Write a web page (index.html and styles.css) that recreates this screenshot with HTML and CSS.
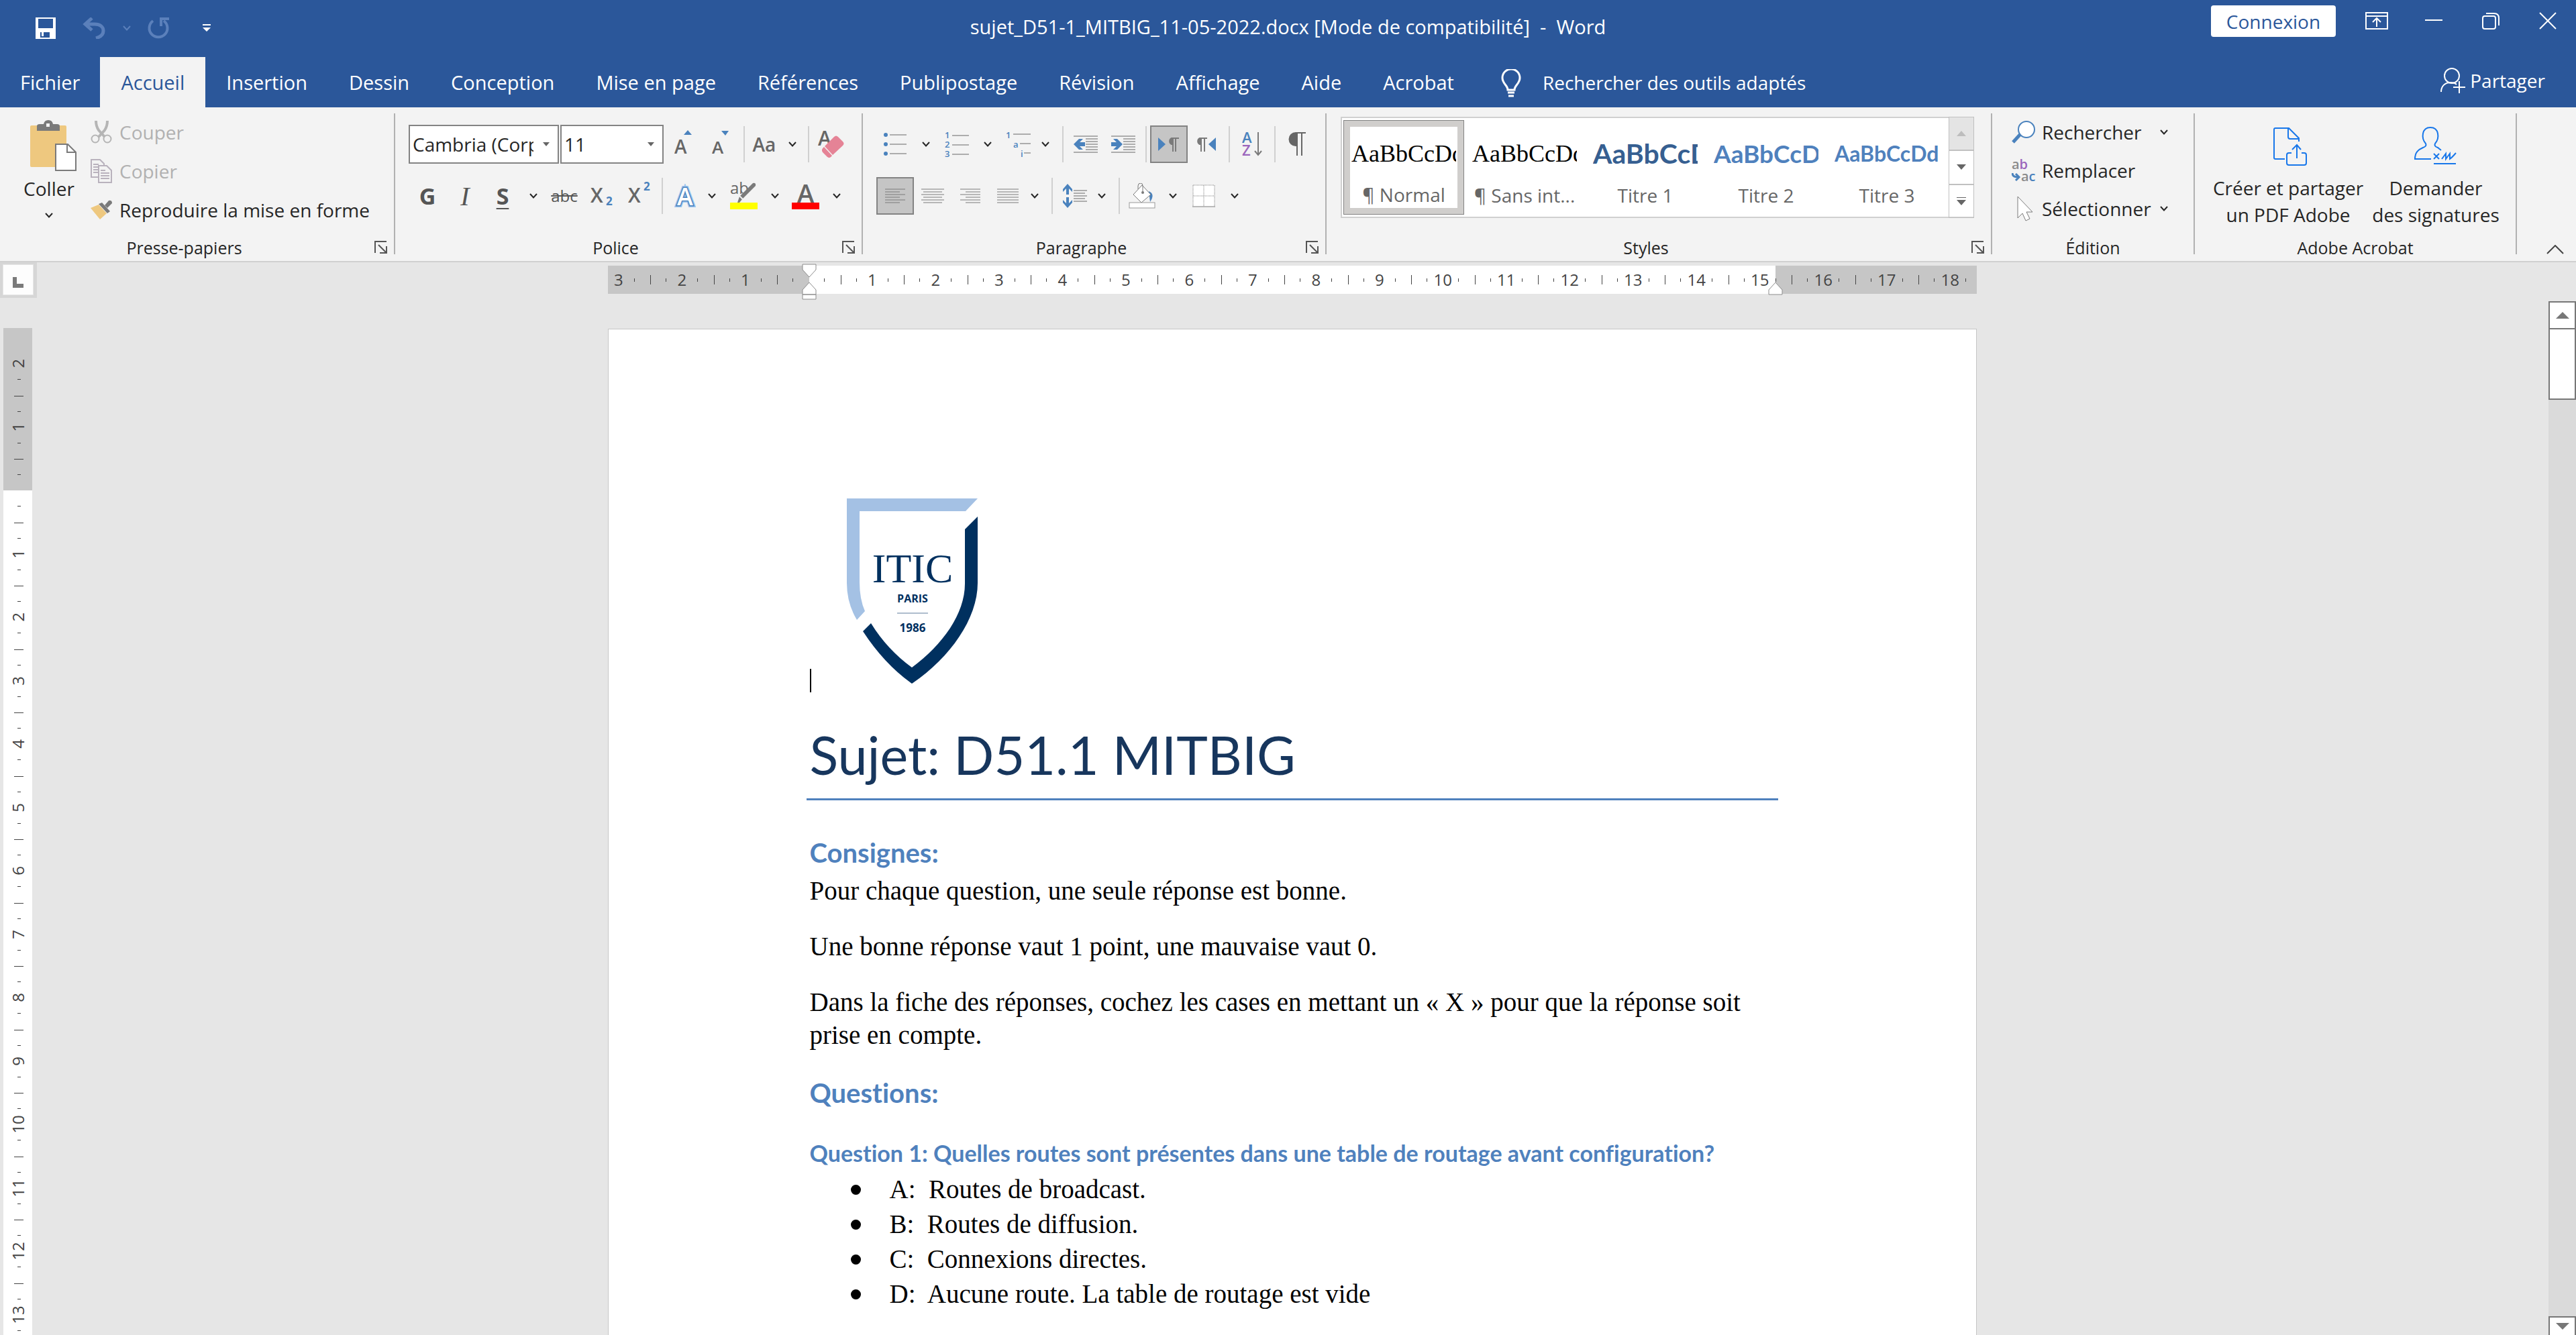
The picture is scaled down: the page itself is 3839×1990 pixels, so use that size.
FILE: index.html
```html
<!DOCTYPE html>
<html lang="fr">
<head>
<meta charset="utf-8">
<meta name="viewport" content="width=device-width, initial-scale=1">
<title>sujet_D51-1_MITBIG_11-05-2022.docx - Word</title>
<link rel="stylesheet" href="styles.css">
</head>
<body>
<svg class="defs" aria-hidden="true">
  <symbol id="chev" viewBox="0 0 12 8"><path d="M1 1l5 5.500 5-5.500" fill="none" stroke="#262626" stroke-width="2"/></symbol>
  <symbol id="launch" viewBox="0 0 20 20"><path d="M1 18V1h17M6 6l11 11M18 8v10H8" fill="none" stroke="#555" stroke-width="2"/></symbol>
</svg>

<header class="top">
  <div class="titlebar">
    <div class="quick">
      <button type="button" aria-label="Enregistrer"><svg width="32" height="32" viewBox="0 0 32 32"><path fill="#fff" fill-rule="evenodd" d="M1 0h30v32H1zM5 2v14h22V2zM8 22v8h14v-8z"/><path fill="#fff" d="M10 22h3v6h-3z"/></svg></button>
      <button type="button" aria-label="Annuler" disabled><svg width="34" height="32" viewBox="0 0 34 32"><path d="M14 1L4 10l10 9M4 10h14c8 0 13 4 13 10s-4 9-11 11" fill="none" stroke="#5b80bb" stroke-width="5"/></svg></button>
      <button type="button" class="slim" aria-label="Options d'annulation" disabled><svg width="12" height="8" viewBox="0 0 12 8"><path d="M1 1l5 5.500 5-5.500" fill="none" stroke="#5b80bb" stroke-width="2"/></svg></button>
      <button type="button" aria-label="Rétablir" disabled><svg width="34" height="32" viewBox="0 0 34 32"><path d="M9 5a13.500 13.500 0 1 0 16 0M21 13V2h12" fill="none" stroke="#5b80bb" stroke-width="4"/></svg></button>
      <button type="button" aria-label="Personnaliser"><svg width="12" height="12" viewBox="0 0 12 12"><path fill="#fff" d="M0 0h12v2H0zM0 5h12l-6 6z"/></svg></button>
    </div>
    <h1 class="doc-name">sujet_D51-1_MITBIG_11-05-2022.docx [Mode de compatibilité]&nbsp; -&nbsp; Word</h1>
    <div class="window">
      <button type="button" class="signin">Connexion</button>
      <div class="window-controls">
      <button type="button" aria-label="Options du ruban"><svg width="34" height="26" viewBox="0 0 34 26"><path d="M1 1h32v24H1zM1 6h32M17 22V10M11 15l6-6 6 6" fill="none" stroke="#fff" stroke-width="2"/></svg></button>
      <button type="button" aria-label="Réduire"><svg width="26" height="26" viewBox="0 0 26 26"><path d="M0 12h26" stroke="#fff" stroke-width="2"/></svg></button>
      <button type="button" aria-label="Restaurer"><svg width="26" height="26" viewBox="0 0 26 26"><rect x="1" y="6" width="19" height="19" rx="3" fill="none" stroke="#fff" stroke-width="2"/><path d="M6 2h12q7 0 7 7v11" fill="none" stroke="#fff" stroke-width="2"/></svg></button>
      <button type="button" aria-label="Fermer"><svg width="26" height="26" viewBox="0 0 26 26"><path d="M1 1l24 24M25 1L1 25" stroke="#fff" stroke-width="2"/></svg></button>
      </div>
    </div>
  </div>
  <nav class="tabs">
    <a href="#fichier">Fichier</a>
    <a href="#accueil" class="active" aria-current="page">Accueil</a>
    <a href="#insertion">Insertion</a>
    <a href="#dessin">Dessin</a>
    <a href="#conception">Conception</a>
    <a href="#mise-en-page">Mise en page</a>
    <a href="#references">Références</a>
    <a href="#publipostage">Publipostage</a>
    <a href="#revision">Révision</a>
    <a href="#affichage">Affichage</a>
    <a href="#aide">Aide</a>
    <a href="#acrobat">Acrobat</a>
    <a href="#outils" class="tell"><svg width="30" height="42" viewBox="0 0 30 42"><path d="M10 31c0-7-8-9-8-18a13 13 0 0 1 26 0c0 9-8 11-8 18zM10 35h10M11 40h8" fill="none" stroke="#fff" stroke-width="3"/></svg>Rechercher des outils adaptés</a>
    <button type="button" class="share"><svg width="38" height="38" viewBox="0 0 38 38"><circle cx="17" cy="12" r="11" fill="none" stroke="#fff" stroke-width="2"/><path d="M1 36c0-9 6-14 14-14 4 0 7 1 9 3M28 20v18M19 29h18" fill="none" stroke="#fff" stroke-width="2"/></svg>Partager</button>
  </nav>
</header>

<section class="ribbon" id="accueil">
  <div class="group clipboard">
    <div class="body">
      <button type="button" class="big paste">
        <svg width="70" height="76" viewBox="0 0 70 76"><rect x="1" y="8" width="54" height="62" rx="2" fill="#eec87f"/><path d="M11 16V9q0-3 4-3h6q1-6 7-6t7 6h6q4 0 4 3v7z" fill="#7a7a7a"/><rect x="25" y="5" width="5" height="5" fill="#f3f3f3"/><path d="M39 36h18l12 12v27H39z" fill="#fff" stroke="#7a7a7a" stroke-width="2"/><path d="M56 36v12h12" fill="none" stroke="#7a7a7a" stroke-width="2"/></svg>
        <span>Coller</span>
        <svg class="chev" width="12" height="8"><use href="#chev"/></svg>
      </button>
      <div class="lines">
        <button type="button" disabled><svg width="32" height="36" viewBox="0 0 32 36"><path d="M8 1q0 8 4 14l9 10M25 1q0 8-4 14l-9 10" fill="none" stroke="#b5b5b5" stroke-width="4"/><circle cx="7" cy="28" r="5.500" fill="none" stroke="#b5b5b5" stroke-width="2"/><circle cx="25" cy="28" r="5.500" fill="none" stroke="#b5b5b5" stroke-width="2"/></svg>Couper</button>
        <button type="button" disabled><svg width="32" height="36" viewBox="0 0 32 36"><path d="M12 27H1V1h13l6 6v3M4 8h8M4 12h7M4 16h7M4 20h7M12 10h12l7 7v18H12zM15 17h7M15 21h13M15 25h13M15 29h13" fill="none" stroke="#b9b2bd" stroke-width="2"/></svg>Copier</button>
        <button type="button"><svg width="34" height="30" viewBox="0 0 34 30"><path d="M1 12l12-5 12 13-10 9z" fill="#eec87f"/><path d="M13 6l5-2 12 13-4 3z" fill="#7a7a7a"/><path d="M22 8l6-7q5-1 5 4l-7 7z" fill="#7a7a7a"/></svg>Reproduire la mise en forme</button>
      </div>
    </div>
    <footer><span>Presse-papiers</span><button type="button" class="launch" aria-label="Presse-papiers, options"><svg width="20" height="20"><use href="#launch"/></svg></button></footer>
  </div>

  <div class="group font">
    <div class="body rows">
      <div class="row">
        <select class="font-name" aria-label="Police"><option>Cambria (Corps)</option></select>
        <select class="font-size" aria-label="Taille"><option>11</option></select>
        <button type="button" class="tool" aria-label="Agrandir"><svg width="28" height="44" viewBox="0 0 28 44"><text x="0" y="36" font-size="28" fill="#666" font-weight="600">A</text><path d="M14 8l6-7 6 7z" fill="#4a82bd"/></svg></button>
        <button type="button" class="tool" aria-label="Réduire la police"><svg width="28" height="44" viewBox="0 0 28 44"><text x="0" y="36" font-size="26" fill="#666" font-weight="600">A</text><path d="M14 2h11l-5 7z" fill="#4a82bd"/></svg></button>
        <span class="sep"></span>
        <button type="button" class="tool case">Aa</button>
        <button type="button" class="chev-btn" aria-label="Casse, options"><svg width="12" height="8"><use href="#chev"/></svg></button>
        <span class="sep"></span>
        <button type="button" class="tool" aria-label="Effacer la mise en forme"><svg width="40" height="44" viewBox="0 0 40 44"><text x="0" y="24" font-size="30" fill="#666" font-weight="600">A</text><path d="M24 11q3-3 6 0l7 7q3 3 0 6L22 38 10 25z" fill="#e58396"/><path d="M9 26l12 13q-3 5-7 2l-7-7q-3-4 2-8z" fill="#e58396"/></svg></button>
      </div>
      <div class="row">
        <button type="button" class="tool bold">G</button>
        <button type="button" class="tool italic">I</button>
        <button type="button" class="tool under">S</button>
        <button type="button" class="chev-btn" aria-label="Soulignement, options"><svg width="12" height="8"><use href="#chev"/></svg></button>
        <button type="button" class="tool strike">abc</button>
        <button type="button" class="tool" aria-label="Indice"><svg width="34" height="44" viewBox="0 0 34 44"><text x="0" y="32" font-size="30" font-weight="600" fill="#666">X</text><text x="23" y="36" font-size="17" font-weight="700" fill="#4a82bd">2</text></svg></button>
        <button type="button" class="tool" aria-label="Exposant"><svg width="34" height="44" viewBox="0 0 34 44"><text x="0" y="32" font-size="30" font-weight="600" fill="#666">X</text><text x="23" y="14" font-size="17" font-weight="700" fill="#4a82bd">2</text></svg></button>
        <span class="sep"></span>
        <button type="button" class="tool" aria-label="Effets de texte"><svg width="32" height="36" viewBox="0 0 32 36"><text x="4" y="32" font-size="36" font-weight="600" fill="#fff" stroke="#9cc4ee" stroke-width="6" paint-order="stroke">A</text><text x="4" y="32" font-size="36" font-weight="600" fill="#fff" stroke="#4a82bd" stroke-width="3" paint-order="stroke">A</text></svg></button>
        <button type="button" class="chev-btn narrow" aria-label="Effets, options"><svg width="12" height="8"><use href="#chev"/></svg></button>
        <button type="button" class="tool after" aria-label="Surlignage"><svg width="42" height="42" viewBox="0 0 42 42"><text x="0" y="18" font-size="24" fill="#666">ab</text><path d="M11 31l3-9 20-20q5-1 4 4L18 26l-4 5z" fill="#7a7a7a"/><path d="M13 20l7 7" stroke="#f3f3f3" stroke-width="2"/><path d="M0 31h41v10H0z" fill="#ff0"/></svg></button>
        <button type="button" class="chev-btn" aria-label="Surlignage, options"><svg width="12" height="8"><use href="#chev"/></svg></button>
        <button type="button" class="tool" aria-label="Couleur de police"><svg width="42" height="42" viewBox="0 0 42 42"><text x="8" y="31" font-size="38" fill="#666" font-weight="600">A</text><path d="M0 31h41v10H0z" fill="red"/></svg></button>
        <button type="button" class="chev-btn" aria-label="Couleur, options"><svg width="12" height="8"><use href="#chev"/></svg></button>
      </div>
    </div>
    <footer><span>Police</span><button type="button" class="launch" aria-label="Police, options"><svg width="20" height="20"><use href="#launch"/></svg></button></footer>
  </div>

  <div class="group para">
    <div class="body rows">
      <div class="row">
        <button type="button" class="tool" aria-label="Puces"><svg width="36" height="38" viewBox="0 0 36 38"><g fill="#4a82bd"><circle cx="4" cy="5" r="3"/><circle cx="4" cy="19" r="3"/><circle cx="4" cy="33" r="3"/></g><path d="M10 5h25M10 19h25M10 33h25" stroke="#666" stroke-width="1"/></svg></button>
        <button type="button" class="chev-btn" aria-label="Puces, options"><svg width="12" height="8"><use href="#chev"/></svg></button>
        <button type="button" class="tool" aria-label="Numérotation"><svg width="36" height="40" viewBox="0 0 36 40"><g fill="#4a82bd" font-size="13" font-weight="600"><text x="0" y="11">1</text><text x="0" y="25">2</text><text x="0" y="39">3</text></g><path d="M11 7h25M11 21h25M11 35h25" stroke="#666" stroke-width="1"/></svg></button>
        <button type="button" class="chev-btn" aria-label="Numérotation, options"><svg width="12" height="8"><use href="#chev"/></svg></button>
        <button type="button" class="tool" aria-label="Liste à plusieurs niveaux"><svg width="38" height="40" viewBox="0 0 38 40"><g fill="#4a82bd" font-size="13" font-weight="600"><text x="0" y="11">1</text><text x="11" y="25">a</text><text x="22" y="39">i</text></g><path d="M11 5h26M21 19h16M27 33h10" stroke="#666" stroke-width="1"/></svg></button>
        <button type="button" class="chev-btn narrow" aria-label="Niveaux, options"><svg width="12" height="8"><use href="#chev"/></svg></button>
        <span class="sep after"></span>
        <button type="button" class="tool" aria-label="Diminuer le retrait"><svg width="36" height="26" viewBox="0 0 36 26"><path d="M0 1h36M18 5h18M18 9h18M18 13h18M18 17h18M18 21h18M0 25h36" stroke="#666" stroke-width="1"/><path d="M0 13l8-8h6l-5 5h8v6H9l5 5H8z" fill="#4a82bd"/></svg></button>
        <button type="button" class="tool" aria-label="Augmenter le retrait"><svg width="36" height="26" viewBox="0 0 36 26"><path d="M0 1h36M18 5h18M18 9h18M18 13h18M18 17h18M18 21h18M0 25h36" stroke="#666" stroke-width="1"/><path d="M17 13L9 5H3l5 5H0v6h8l-5 5h6z" fill="#4a82bd"/></svg></button>
        <span class="sep"></span>
        <button type="button" class="tool on" aria-label="De gauche à droite"><svg width="32" height="24" viewBox="0 0 32 24"><path d="M0 2l11 10L0 22z" fill="#4a82bd"/><path d="M31 3H20a5 5 0 0 0 0 9h2M22 3v20M26 3v20" fill="none" stroke="#7a7a7a" stroke-width="2"/><path d="M22 3h-2a5 5 0 0 0 0 9h2z" fill="#7a7a7a"/></svg></button>
        <button type="button" class="tool" aria-label="De droite à gauche"><svg width="30" height="24" viewBox="0 0 30 24"><path d="M29 2L18 12l11 10z" fill="#4a82bd"/><path d="M16 3H5a5 5 0 0 0 0 9h2M7 3v20M12 3v20" fill="none" stroke="#7a7a7a" stroke-width="2"/><path d="M7 3H5a5 5 0 0 0 0 9h2z" fill="#7a7a7a"/></svg></button>
        <span class="sep"></span>
        <button type="button" class="tool" aria-label="Trier"><svg width="30" height="38" viewBox="0 0 30 38"><text x="0" y="17" font-size="22" font-weight="600" fill="#4a82bd">A</text><text x="0" y="36" font-size="22" font-weight="600" fill="#9b65bc">Z</text><path d="M24 1v34M19 29l5 6 5-6" fill="none" stroke="#7a7a7a" stroke-width="2"/></svg></button>
        <span class="sep"></span>
        <button type="button" class="tool" aria-label="Afficher tout"><svg width="28" height="36" viewBox="0 0 28 36"><path d="M26 1H11a9 9 0 0 0 0 19h2V1M13 1v34M20 1v34" fill="none" stroke="#666" stroke-width="2"/><path d="M13 1h-2a9 9 0 0 0 0 19h2z" fill="#666"/></svg></button>
      </div>
      <div class="row">
        <button type="button" class="tool on" aria-label="Aligner à gauche"><svg width="34" height="22" viewBox="0 0 34 22"><path d="M2 1h30M2 5h22M2 9h30M2 13h22M2 17h30M2 21h22" stroke="#7a7a7a" stroke-width="1"/></svg></button>
        <button type="button" class="tool" aria-label="Centrer"><svg width="34" height="22" viewBox="0 0 34 22"><path d="M0 1h34M3 5h28M0 9h34M3 13h28M0 17h34M3 21h28" stroke="#7a7a7a" stroke-width="1"/></svg></button>
        <button type="button" class="tool" aria-label="Aligner à droite"><svg width="30" height="22" viewBox="0 0 30 22"><path d="M0 1h30M8 5h22M0 9h30M8 13h22M0 17h30M8 21h22" stroke="#7a7a7a" stroke-width="1"/></svg></button>
        <button type="button" class="tool" aria-label="Justifier"><svg width="32" height="22" viewBox="0 0 32 22"><path d="M0 1h32M0 5h32M0 9h32M0 13h32M0 17h32M0 21h32" stroke="#7a7a7a" stroke-width="1"/></svg></button>
        <button type="button" class="chev-btn narrow" aria-label="Alignement, options"><svg width="12" height="8"><use href="#chev"/></svg></button>
        <span class="sep after"></span>
        <button type="button" class="tool" aria-label="Interligne"><svg width="36" height="36" viewBox="0 0 36 36"><path d="M7 0l7 8v4l-5-5v9H5V7l-5 5V8zM7 36l7-8v-4l-5 5v-9H5v9l-5-5v4z" fill="#4a82bd"/><path d="M16 10h20M16 14h17M16 18h20M16 22h17M16 26h20" stroke="#666" stroke-width="1"/></svg></button>
        <button type="button" class="chev-btn narrow" aria-label="Interligne, options"><svg width="12" height="8"><use href="#chev"/></svg></button>
        <span class="sep after"></span>
        <button type="button" class="tool" aria-label="Trame de fond"><svg width="40" height="38" viewBox="0 0 40 38"><path d="M30 12q10 4 2 16z" fill="#4a82bd"/><path d="M20 3L7 17l12 12 14-12z" fill="#fff" stroke="#7a7a7a" stroke-width="1"/><path d="M14 9V4q0-4 4-4 3 0 3 4v10" fill="none" stroke="#7a7a7a" stroke-width="1"/><circle cx="21" cy="14" r="2" fill="#7a7a7a"/><rect x="1" y="29" width="38" height="8" fill="#fff" stroke="#999"/></svg></button>
        <button type="button" class="chev-btn" aria-label="Trame, options"><svg width="12" height="8"><use href="#chev"/></svg></button>
        <button type="button" class="tool" aria-label="Bordures"><svg width="34" height="34" viewBox="0 0 34 34"><path d="M1 1h32v32H1z" fill="#fff"/><path d="M1 1h32v32M1 1v32M17 1v32M1 17h32" fill="none" stroke="#7a7a7a" stroke-width="1" stroke-dasharray="1 1"/><path d="M0 33h34" stroke="#7a7a7a" stroke-width="1"/></svg></button>
        <button type="button" class="chev-btn" aria-label="Bordures, options"><svg width="12" height="8"><use href="#chev"/></svg></button>
      </div>
    </div>
    <footer><span>Paragraphe</span><button type="button" class="launch" aria-label="Paragraphe, options"><svg width="20" height="20"><use href="#launch"/></svg></button></footer>
  </div>

  <div class="group styles">
    <div class="body">
      <div class="gallery">
        <button type="button" class="style selected"><span class="sample serif">AaBbCcDd</span><span>¶ Normal</span></button>
        <button type="button" class="style"><span class="sample serif">AaBbCcDd</span><span>¶ Sans int...</span></button>
        <button type="button" class="style"><span class="sample t1">AaBbCcD</span><span>Titre 1</span></button>
        <button type="button" class="style"><span class="sample t2">AaBbCcD</span><span>Titre 2</span></button>
        <button type="button" class="style"><span class="sample t3">AaBbCcDd</span><span>Titre 3</span></button>
        <div class="gallery-nav">
          <button type="button" disabled aria-label="Précédent"><svg width="14" height="8"><path d="M0 8l7-8 7 8z" fill="#bdbdbd"/></svg></button>
          <button type="button" aria-label="Suivant"><svg width="14" height="8"><path d="M0 0h14l-7 8z" fill="#666"/></svg></button>
          <button type="button" aria-label="Autres"><svg width="14" height="12"><path d="M0 0h14v1H0zM0 4h14l-7 8z" fill="#666"/></svg></button>
        </div>
      </div>
    </div>
    <footer><span>Styles</span><button type="button" class="launch" aria-label="Styles, options"><svg width="20" height="20"><use href="#launch"/></svg></button></footer>
  </div>

  <div class="group editing">
    <div class="body">
      <div class="lines">
        <button type="button"><svg width="36" height="36" viewBox="0 0 36 36"><path d="M13 21L2 33" stroke="#4a82bd" stroke-width="5"/><circle cx="22" cy="14" r="12" fill="#fff" stroke="#4a82bd" stroke-width="2"/></svg><span>Rechercher</span><svg class="chev" width="12" height="8"><use href="#chev"/></svg></button>
        <button type="button"><svg width="36" height="36" viewBox="0 0 36 36"><g font-size="20" font-weight="600"><text x="0" y="16" fill="#8a8a8a">a<tspan fill="#9b65bc">b</tspan></text><text x="14" y="34" fill="#8a8a8a">a<tspan fill="#4a82bd">c</tspan></text></g><path d="M1 22q0 6 9 6M6 23l5 5-5 5" fill="none" stroke="#4a82bd" stroke-width="3"/></svg><span>Remplacer</span></button>
        <button type="button"><svg width="36" height="38" viewBox="0 0 36 38"><path d="M9 1v32l7-7 5 11 6-3-5-10h9z" fill="#fff" stroke="#7a7a7a" stroke-width="1"/></svg><span>Sélectionner</span><svg class="chev" width="12" height="8"><use href="#chev"/></svg></button>
      </div>
    </div>
    <footer><span>Édition</span></footer>
  </div>

  <div class="group acrobat">
    <div class="body">
      <button type="button" class="big"><svg width="64" height="76" viewBox="0 0 64 76"><path d="M27 58H13q-2 0-2-2V14q0-2 2-2h20l15 15v5M32 12v13q0 3 3 3h12M37 49h-4q-3 0-3 3v12q0 3 3 3h23q3 0 3-3V52q0-3-3-3h-4M45 57V38M38 44l7-7 6 7" fill="none" stroke="#1877ea" stroke-width="2"/></svg><span>Créer et partager<br>un PDF Adobe</span></button>
      <button type="button" class="big"><svg width="64" height="76" viewBox="0 0 64 76"><path d="M25 58H1c0-10 5-14 12-17q6-2 4-6c-7-8-6-24 7-24s14 16 7 24q-2 4 4 6l5 4M29 65h33M29 50l8 8M37 50l-8 8M41 58l6-8v8l6-8v8q3-2 9-9" fill="none" stroke="#1877ea" stroke-width="2"/></svg><span>Demander<br>des signatures</span></button>
    </div>
    <footer><span>Adobe Acrobat</span></footer>
  </div>
  <button type="button" class="collapse" aria-label="Réduire le ruban"><svg width="26" height="14" viewBox="0 0 26 14"><path d="M1 13L13 1l12 12" fill="none" stroke="#444" stroke-width="2"/></svg></button>
</section>

<main class="workspace">
  <div class="corner"><button type="button" aria-label="Tabulation"><svg width="16" height="16"><path d="M0 0h6v10h10v6H0z" fill="#7a7a7a"/></svg></button></div>
  <div class="hruler">
    <div class="track">
      <ol><li>3</li><li>2</li><li>1</li><li class="zero"></li><li>1</li><li>2</li><li>3</li><li>4</li><li>5</li><li>6</li><li>7</li><li>8</li><li>9</li><li>10</li><li>11</li><li>12</li><li>13</li><li>14</li><li>15</li><li>16</li><li>17</li><li>18</li></ol>
    </div>
    <svg class="marker left" width="22" height="54" viewBox="0 0 22 54"><path d="M1 1h20v8l-10 11L1 9zM1 46V39l10-11 10 11v7zM1 46h20v7H1z" fill="#fff" stroke="#8c8c8c" stroke-width="1"/></svg>
    <svg class="marker right" width="22" height="54" viewBox="0 0 22 54"><path d="M1 46V39l10-11 10 11v7z" fill="#fff" stroke="#8c8c8c" stroke-width="1"/></svg>
  </div>
  <div class="vruler">
    <ol><li class="first"><span>2</span></li><li><span>1</span></li><li class="zero"></li><li><span>1</span></li><li><span>2</span></li><li><span>3</span></li><li><span>4</span></li><li><span>5</span></li><li><span>6</span></li><li><span>7</span></li><li><span>8</span></li><li><span>9</span></li><li><span>10</span></li><li><span>11</span></li><li><span>12</span></li><li><span>13</span></li></ol>
  </div>
  <div class="canvas">
    <article class="sheet">
      <div class="logo-line">
        <span class="caret"></span>
        <svg class="logo" width="196" height="277" viewBox="0 0 196 277" role="img" aria-label="ITIC Paris 1986">
          <path d="M0 0h195l-18 19H19v106q0 25 8 43l-12 13Q0 156 0 126z" fill="#a4c1e4"/>
          <path d="M195 27v99c0 54-42 112-98 150Q56 247 24 198l12-12q24 39 61 66c46-34 79-80 79-125V46z" fill="#00305f"/>
          <g fill="#00305f" text-anchor="middle"><text x="98" y="125" font-size="62" class="logo-serif">ITIC</text><text x="98" y="155" font-size="16" font-weight="700">PARIS</text><text x="98" y="199" font-size="17" font-weight="700">1986</text></g>
          <path d="M75 171h46" stroke="#5f7d9c" stroke-width="1"/>
        </svg>
      </div>
      <h1>Sujet: D51.1 MITBIG</h1>
      <h2>Consignes:</h2>
      <p>Pour chaque question, une seule réponse est bonne.</p>
      <p>Une bonne réponse vaut 1 point, une mauvaise vaut 0.</p>
      <p>Dans la fiche des réponses, cochez les cases en mettant un «&nbsp;X&nbsp;» pour que la réponse soit<br>prise en compte.</p>
      <h2 class="second">Questions:</h2>
      <h3>Question 1: Quelles routes sont présentes dans une table de routage avant configuration?</h3>
      <ul>
        <li>A:&nbsp; Routes de broadcast.</li>
        <li>B:&nbsp; Routes de diffusion.</li>
        <li>C:&nbsp; Connexions directes.</li>
        <li>D:&nbsp; Aucune route. La table de routage est vide</li>
      </ul>
    </article>
  </div>
  <div class="scrollbar">
    <button type="button" aria-label="Défiler vers le haut"><svg width="20" height="10"><path d="M0 10L10 0l10 10z" fill="#777"/></svg></button>
    <div class="thumb"></div>
    <div class="rail"></div>
    <button type="button" class="down" aria-label="Défiler vers le bas"><svg width="20" height="10"><path d="M0 0h20L10 10z" fill="#777"/></svg></button>
  </div>
</main>
</body>
</html>
```

FILE: styles.css
```css
* { box-sizing: border-box; }
body {
  margin: 0;
  height: 100vh;
  display: flex;
  flex-direction: column;
  overflow: hidden;
  font: 28px/40px "Open Sans", "Noto Sans", sans-serif;
  color: #262626;
  background: #e6e6e6;
}
button {
  margin: 0;
  padding: 0;
  border: 0;
  background: none;
  font: inherit;
  color: inherit;
  display: flex;
  align-items: center;
  justify-content: center;
}
svg { display: block; flex: none; }
.defs { position: absolute; width: 0; height: 0; }

/* Title bar and tabs */
.top { background: #2b579a; color: #fff; }
.titlebar {
  display: grid;
  grid-template-columns: 1fr auto 1fr;
  align-items: start;
  height: 85px;
}
.quick { display: flex; padding: 26px 0 0 35px; }
.quick button { width: 66px; height: 32px; }
.quick .slim { width: 20px; margin-left: 6px; }
.quick button:nth-child(2) { margin-left: 6px; }
.quick button:nth-child(4) { margin-left: 4px; }
.quick button:nth-child(5) { margin-left: 6px; }
.doc-name { margin: 0; padding-top: 20px; font-size: 29px; font-weight: 400; line-height: 40px; }
.window { display: flex; justify-content: flex-end; padding-top: 8px; }
.signin {
  width: 186px;
  height: 47px;
  border-radius: 4px;
  background: #fff;
  color: #2b579a;
}
.window-controls { display: flex; padding: 10px 0 0 18px; }
.window-controls button { width: 85px; height: 26px; }
.tabs { display: flex; height: 75px; align-items: stretch; }
.tabs a {
  padding: 18px 31px 0;
  font-size: 29px;
  color: #fff;
  text-decoration: none;
}
.tabs a:first-child { padding: 18px 30px 0; }
.tabs .active { background: #f3f3f3; color: #2b579a; }
.tabs .tell { display: flex; gap: 32px; margin-left: 8px; font-size: 28px; }
.share { margin-left: auto; padding: 0 46px 6px 0; gap: 6px; }

/* Ribbon */
.ribbon {
  position: relative;
  display: flex;
  height: 231px;
  padding: 9px 0 10px;
  background: #f3f3f3;
  border-bottom: 2px solid #d0d0d0;
}
.group {
  display: flex;
  flex-direction: column;
  border-right: 2px solid #b1b1b1;
}
.group .body { display: flex; flex: 1; }
.group footer {
  display: flex;
  height: 20px;
  align-items: center;
  font-size: 25px;
}
.group footer span { flex: 1; text-align: center; }
.launch { width: 38px; height: 20px; }
.clipboard { width: 589px; }
.font { width: 697px; }
.para { width: 691px; }
.styles { width: 992px; }
.editing { width: 302px; }
.acrobat { width: 480px; }

.big { flex-direction: column; justify-content: flex-start; text-align: center; }
.paste { width: 114px; margin-left: 16px; padding-top: 10px; }
.paste > svg:first-child { margin-left: 12px; }
.paste span { margin-top: 6px; }
.paste .chev { margin-top: 16px; }
.lines { display: flex; flex-direction: column; margin-top: -1px; }
.lines button { height: 58px; gap: 10px; justify-content: flex-start; }
.lines button:disabled { color: #b1b1b1; }
.clipboard .lines { margin-left: 4px; }
.clipboard .lines svg { width: 34px; }
.editing .lines { flex: 1; padding: 0 38px 0 29px; }
.editing .lines button { gap: 9px; height: 57px; }
.editing .chev { margin-left: auto; }

.rows { flex-direction: column; gap: 21px; padding: 18px 0 0 20px; }
.row { display: flex; height: 56px; align-items: center; }
.tool { width: 56px; height: 56px; color: #555; }
.chev-btn { width: 36px; height: 56px; }
.narrow { width: 24px; }
.after { margin-left: 8px; }
.on { background: #c5c5c5; border: 2px solid #838383; }
.sep { width: 2px; height: 54px; margin: 0 5px; background: #d0d0d0; }
.sep.after { margin-left: 13px; }
select {
  appearance: none;
  height: 58px;
  margin: 0 2px 0 0;
  padding: 0 36px 0 4px;
  border: 2px solid #838383;
  border-radius: 0;
  font: inherit;
  color: inherit;
  background: #fff url("data:image/svg+xml,%3Csvg xmlns='http://www.w3.org/2000/svg' width='10' height='6'%3E%3Cpath d='M0 0h10l-5 6z' fill='%23666'/%3E%3C/svg%3E") no-repeat right 12px center;
}
.font-name { width: 224px; }
.font-size { width: 154px; }
.case { width: 48px; font-weight: 600; font-size: 28px; color: #666; }
.bold { font-weight: 700; font-size: 34px; }
.italic { font: italic 40px "Liberation Serif", serif; }
.under { font-weight: 700; font-size: 34px; text-decoration: underline 2px; text-underline-offset: 5px; }
.strike { font-size: 24px; text-decoration: line-through 2px; }

.gallery {
  display: flex;
  width: 944px;
  height: 151px;
  margin: 5px 0 0 21px;
  padding-left: 2px;
  border: 2px solid #d0d0d0;
  border-right: 0;
  background: #fff;
  color: #666;
}
.style {
  width: 180px;
  flex: none;
  height: 141px;
  margin-top: 3px;
  padding: 10px 0 0;
  flex-direction: column;
  justify-content: flex-start;
}
.style.selected { border: 10px solid #d0cecc; padding-top: 0; outline: 1px solid #838383; outline-offset: -1px; }
.sample {
  width: 156px;
  height: 82px;
  padding-top: 5px;
  line-height: 70px;
  overflow: hidden;
  text-align: left;
  white-space: nowrap;
  font-family: Lato, sans-serif;
  font-weight: 700;
  color: #4f81bd;
}
.sample.serif { font: 36px/70px "Liberation Serif", serif; color: #000; }
.t1 { font-size: 41px; color: #365f91; }
.t2 { font-size: 37px; }
.t3 { font-size: 32px; }
.gallery-nav { width: 38px; margin: -2px 0 -2px auto; display: flex; flex-direction: column; }
.gallery-nav button { flex: 1; border: 1px solid #c0c0c0; }
.gallery-nav button:disabled { background: #e4e4e4; }
.acrobat .big { width: 220px; padding-top: 10px; }
.acrobat .big span { margin-top: 5px; white-space: nowrap; }
.acrobat .body { padding-left: 29px; }
.collapse { margin: auto 18px 0 auto; }

/* Work area */
.workspace {
  flex: 1;
  min-height: 0;
  display: grid;
  grid-template: 58px minmax(0, 1fr) / 55px 1fr 43px;
}
.corner { height: 53px; padding: 3px 4px; background: #d6d6d6; }
.corner button { width: 46px; height: 46px; border: 1px solid #e6e6e6; background: #fdfdfd; padding-top: 8px; }
.hruler { position: relative; width: 2040px; margin: 5px auto 0; }
.hruler .track {
  height: 42px;
  overflow: hidden;
  background: linear-gradient(to right, #c6c6c6 300px, #fff 300px 1740px, #c6c6c6 1740px);
}
ol { margin: 0; padding: 0; list-style: none; font-size: 24px; color: #444; }
.hruler ol { display: flex; width: 2079px; margin-left: -31px; }
.hruler li {
  flex: 1;
  height: 42px;
  line-height: 42px;
  text-align: center;
  background:
    linear-gradient(#444, #444) left / 1px 14px,
    linear-gradient(#444, #444) 25% / 1px 5px,
    linear-gradient(#444, #444) 75% / 1px 5px;
  background-repeat: no-repeat;
}
.marker { position: absolute; top: -3px; }
.marker.left { left: 289px; }
.marker.right { left: 1729px; }
.vruler {
  grid-area: 2 / 1;
  width: 43px;
  margin: 40px 0 0 5px;
  padding-top: 6px;
  overflow: hidden;
  background: linear-gradient(#c6c6c6 242px, #fff 242px);
}
.vruler ol { display: grid; grid-template-rows: repeat(16, 1fr); height: 1512px; }
.vruler li {
  display: flex;
  align-items: center;
  justify-content: center;
  background:
    linear-gradient(#444, #444) 16px 0 / 14px 1px,
    linear-gradient(#444, #444) 21px 25% / 5px 1px,
    linear-gradient(#444, #444) 21px 75% / 5px 1px;
  background-repeat: no-repeat;
}
.vruler li.first { background: linear-gradient(#444, #444) 21px 75% / 5px 1px no-repeat; }
.vruler span { transform: rotate(-90deg); }
.canvas { grid-area: 2 / 2; overflow: hidden; }
.sheet {
  width: 2040px;
  min-height: 2640px;
  margin: 41px auto 0;
  padding: 252px 295px 0;
  border: 1px solid #c6c6c6;
  background: #fff;
  color: #000;
  font: 39px/49px "Liberation Serif", serif;
}
.logo-line { display: flex; align-items: flex-end; gap: 53px; padding-left: 5px; }
.caret { width: 2px; height: 35px; margin-bottom: -12px; background: #000; }
.logo { font-family: "Open Sans", sans-serif; }
.logo-serif { font-family: "Liberation Serif", serif; }
.sheet h1 {
  margin: 55px 0 54px;
  padding: 0 5px 15px;
  border-bottom: 3px solid #4f81bd;
  font: 400 79px/100px Lato, sans-serif;
  color: #17365d;
}
.sheet h2, .sheet h3, .sheet p { margin: 0 5px; }
.sheet h2, .sheet h3 {
  font-family: Lato, sans-serif;
  font-weight: 700;
  font-variant-ligatures: none;
  color: #4f81bd;
}
.sheet h2 { font-size: 40px; line-height: 49px; margin-bottom: 7px; }
.sheet p { margin-bottom: 34px; }
.sheet h2.second { margin-top: 38px; margin-bottom: 43px; }
.sheet h3 { font-size: 34px; line-height: 44px; margin-bottom: 6px; }
.sheet ul { margin: 0; padding-left: 66px; line-height: 52px; list-style: none; }
.sheet li { display: flex; align-items: center; gap: 43px; }
.sheet li::before { content: ""; width: 15px; height: 15px; border-radius: 50%; background: #000; }

/* Scroll bar */
.scrollbar { grid-area: 2 / 3; display: flex; flex-direction: column; margin-left: 2px; background: #dadada; }
.scrollbar button { height: 42px; border: 2px solid #777; background: #fff; }
.thumb { height: 105px; border: 2px solid #777; border-top: 0; background: #fff; }
.rail { flex: 1; }
.scrollbar .down { height: 28px; border-bottom: 0; }
```
